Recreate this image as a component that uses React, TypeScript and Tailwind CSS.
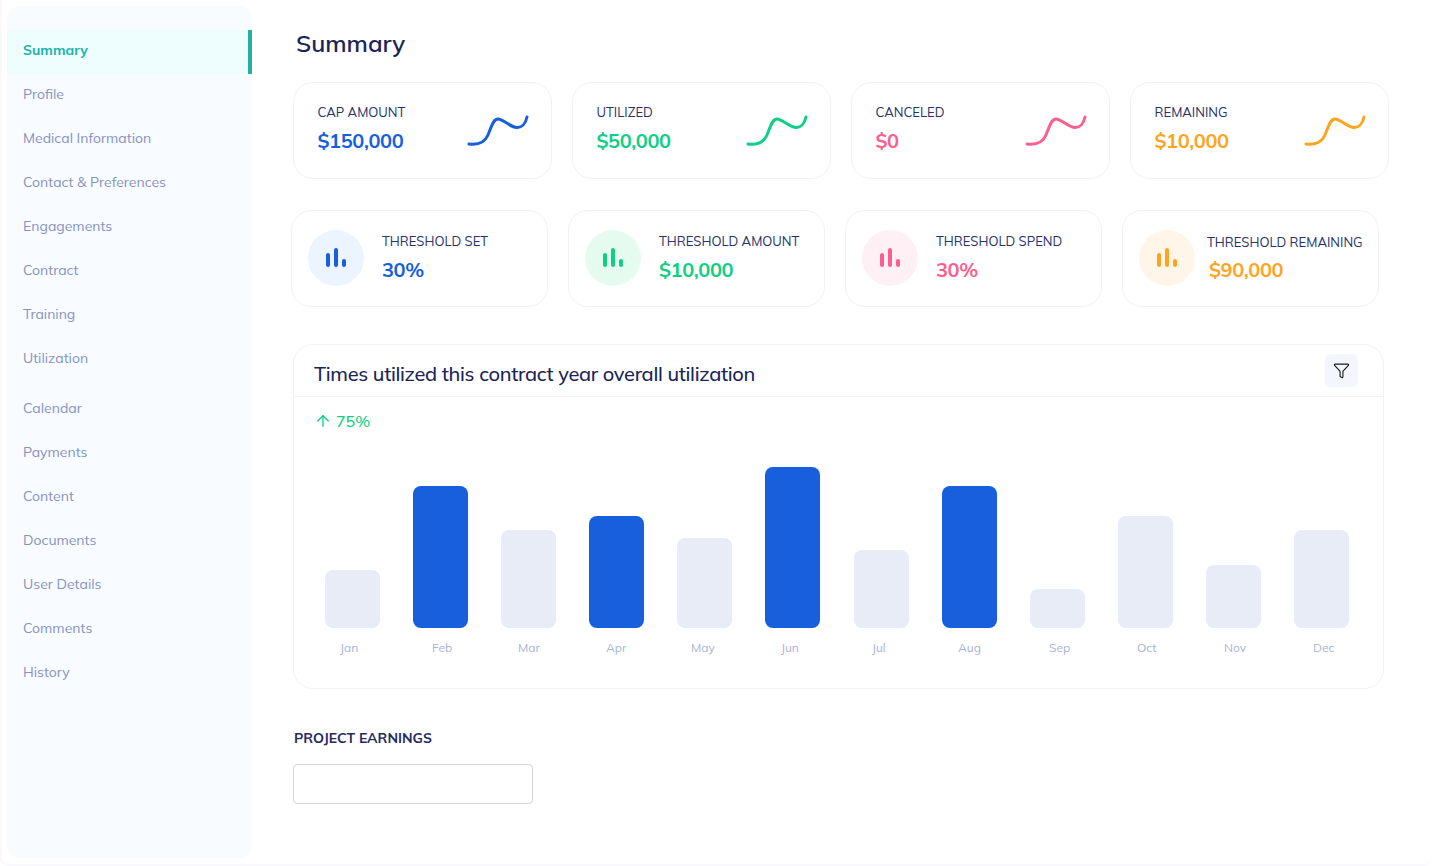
import { ArrowUp, Filter } from "lucide-react";

const navItems = [
  "Summary",
  "Profile",
  "Medical Information",
  "Contact & Preferences",
  "Engagements",
  "Contract",
  "Training",
  "Utilization",
];
const navItems2 = ["Calendar", "Payments", "Content", "Documents", "User Details", "Comments", "History"];

const capCards = [
  { label: "CAP AMOUNT", value: "$150,000", text: "text-[#175fdd]", stroke: "#175fdd" },
  { label: "UTILIZED", value: "$50,000", text: "text-[#0fcf85]", stroke: "#0fcf85" },
  { label: "CANCELED", value: "$0", text: "text-[#fb5f8f]", stroke: "#fb5f8f" },
  { label: "REMAINING", value: "$10,000", text: "text-[#ffa41f]", stroke: "#ffa41f" },
];

const thresholdCards = [
  { label: "THRESHOLD SET", value: "30%", text: "text-[#175fdd]", circle: "bg-[#ebf4ff]", bar: "bg-[#175fdd]", gap: "gap-[18px]", shift: "", valueGap: "mt-[5px]", pad: "pb-[2px]" },
  { label: "THRESHOLD AMOUNT", value: "$10,000", text: "text-[#0fcf85]", circle: "bg-[#e6fbf0]", bar: "bg-[#0fcf85]", gap: "gap-[18px]", shift: "", valueGap: "mt-[5px]", pad: "pb-[2px]" },
  { label: "THRESHOLD SPEND", value: "30%", text: "text-[#fb5f8f]", circle: "bg-[#fff0f5]", bar: "bg-[#fb5f8f]", gap: "gap-[18px]", shift: "", valueGap: "mt-[5px]", pad: "pb-[2px]" },
  { label: "THRESHOLD REMAINING", value: "$90,000", text: "text-[#ffa41f]", circle: "bg-[#fff6e9]", bar: "bg-[#ffa41f]", gap: "gap-[12px]", shift: "pl-[2px]", valueGap: "mt-[4px]", pad: "pb-[1px]" },
];

const bars = [
  { h: "h-[58px]", on: false },
  { h: "h-[142px]", on: true },
  { h: "h-[98px]", on: false },
  { h: "h-[112px]", on: true },
  { h: "h-[90px]", on: false },
  { h: "h-[161px]", on: true },
  { h: "h-[78px]", on: false },
  { h: "h-[142px]", on: true },
  { h: "h-[39px]", on: false },
  { h: "h-[112px]", on: false },
  { h: "h-[63px]", on: false },
  { h: "h-[98px]", on: false },
];

// months don't sit exactly under the bars in the design
const months = [
  { name: "Jan", w: "w-[92px]" },
  { name: "Feb", w: "w-[86px]" },
  { name: "Mar", w: "w-[88px]" },
  { name: "Apr", w: "w-[85px]" },
  { name: "May", w: "w-[90px]" },
  { name: "Jun", w: "w-[91px]" },
  { name: "Jul", w: "w-[86px]" },
  { name: "Aug", w: "w-[91px]" },
  { name: "Sep", w: "w-[88px]" },
  { name: "Oct", w: "w-[87px]" },
  { name: "Nov", w: "w-[89px]" },
  { name: "Dec", w: "w-[30px]" },
];

function Spark({ stroke }: { stroke: string }) {
  return (
    <svg width="64" height="34" viewBox="0 0 64 34" fill="none">
      <path
        d="M3 30 C10.5 31 18 30 22 21 C25 14 27 5 32 5 C37 5 44 13 50.5 13.5 C55.5 14 59.5 10 61 3"
        stroke={stroke}
        strokeWidth="3"
        strokeLinecap="round"
      />
    </svg>
  );
}

function Sidebar() {
  return (
    <aside className="ml-[5px] mt-[6px] h-[852px] w-[245px] shrink-0 rounded-xl bg-[#f8fbff] pt-[24px]">
      {navItems.map((item, i) => (
        <div
          key={item}
          className={
            i === 0
              ? "flex h-[44px] items-center border-r-[4px] border-[#20b2a8] bg-[#eefeff] pb-[4px] pl-4 text-sm font-bold text-[#20b2a8]"
              : "flex h-[44px] items-center pb-[4px] pl-4 text-sm text-[#8592c2]"
          }
        >
          {item}
        </div>
      ))}
      <div className="mt-[6px]">
        {navItems2.map((item) => (
          <div key={item} className="flex h-[44px] items-center pb-[4px] pl-4 text-sm text-[#8592c2]">
            {item}
          </div>
        ))}
      </div>
    </aside>
  );
}

export default function App() {
  return (
    <div className="flex h-[866px] overflow-hidden rounded-b-lg border-b-2 border-l-2 border-[#f9f9fd] bg-white font-['Mulish','Nunito_Sans','Lato',sans-serif] text-[#1a2459]">
      <Sidebar />
      <main className="min-w-0 flex-1 pt-[27px]">
        <h1 className="ml-[44px] text-2xl leading-8 font-semibold">Summary</h1>

        <div className="ml-[41px] mt-[23px] flex gap-[20px]">
          {capCards.map((c) => (
            <div
              key={c.label}
              className="flex h-[97px] w-[259px] items-center justify-between rounded-[20px] border border-[#f1f2f5] pl-[23.5px] pr-[21px]"
            >
              <div className="pb-[4px]">
                <p className="text-[13px] leading-5 text-[#27326b]">{c.label}</p>
                <p className={`mt-[5px] text-xl leading-7 font-bold tracking-[-0.4px] ${c.text}`}>{c.value}</p>
              </div>
              <Spark stroke={c.stroke} />
            </div>
          ))}
        </div>

        <div className="ml-[39px] mt-[31px] flex gap-[20px]">
          {thresholdCards.map((c) => (
            <div
              key={c.label}
              className={`flex h-[97px] w-[257px] items-center rounded-[20px] border border-[#f1f2f5] pl-[16px] ${c.gap}`}
            >
              <div className={`mb-[2px] flex size-[56px] shrink-0 items-center justify-center rounded-full ${c.circle}`}>
                <div className="flex h-[19px] items-end gap-[4px]">
                  <span className={`h-[14px] w-[4px] rounded-full ${c.bar}`} />
                  <span className={`h-[19px] w-[4px] rounded-full ${c.bar}`} />
                  <span className={`h-[8px] w-[4px] rounded-full ${c.bar}`} />
                </div>
              </div>
              <div className={c.pad}>
                <p className="text-[13px] leading-5 text-[#27326b]">{c.label}</p>
                <p className={`text-xl leading-7 font-bold tracking-[-0.4px] ${c.valueGap} ${c.text} ${c.shift}`}>{c.value}</p>
              </div>
            </div>
          ))}
        </div>

        <section className="ml-[41px] mt-[37px] h-[345px] w-[1091px] rounded-[20px] border border-[#f1f2f5]">
          <div className="flex h-[52px] items-start justify-between border-b border-[#f1f2f5] pl-[20px] pr-[25px]">
            <h2 className="mt-[15px] text-xl leading-7 font-medium tracking-[-0.32px]">
              Times utilized this contract year overall utilization
            </h2>
            <button className="mt-[9px] flex size-[33px] items-center justify-center rounded-md bg-[#f3f6fe]">
              <Filter size={17} strokeWidth={1.6} className="text-[#1a1a1a]" />
            </button>
          </div>
          <div className="ml-[20px] mt-[14px] flex items-center gap-[4px] text-base leading-5 font-medium text-[#0fcf85]">
            <ArrowUp size={18} strokeWidth={1.8} />
            75%
          </div>
          <div className="ml-[31px] mt-[36px] flex h-[161px] items-end gap-[33.1px]">
            {bars.map((b, i) => (
              <div key={i} className={`w-[55px] rounded-lg ${b.h} ${b.on ? "bg-[#175fdd]" : "bg-[#e8ecf7]"}`} />
            ))}
          </div>
          <div className="ml-[46px] mt-[12px] flex text-xs leading-4 text-[#a8b2d4]">
            {months.map((m) => (
              <span key={m.name} className={`shrink-0 ${m.w}`}>
                {m.name}
              </span>
            ))}
          </div>
        </section>

        <p className="ml-[42px] mt-[39px] text-sm leading-5 font-bold text-[#232c5e]">PROJECT EARNINGS</p>
        <input className="ml-[41px] mt-[16px] block h-[40px] w-[240px] rounded border border-[#d5d5d5] bg-white" />
      </main>
    </div>
  );
}
